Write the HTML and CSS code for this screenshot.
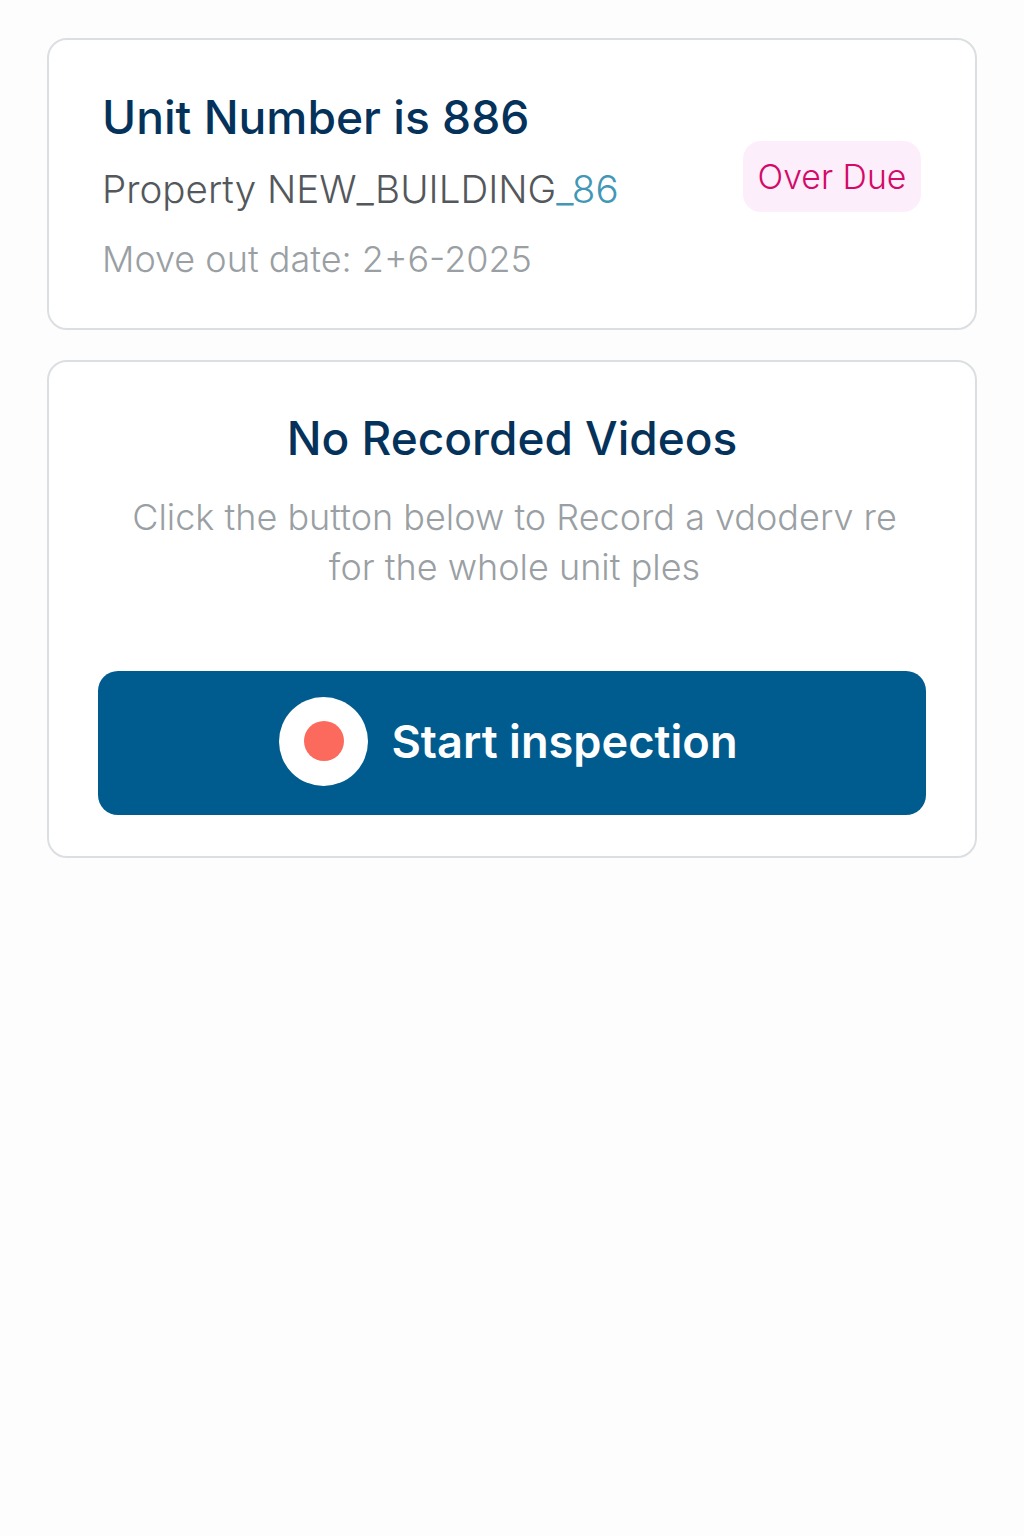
FILE: index.html
```html
<!DOCTYPE html>
<html lang="en">
<head>
    <meta charset="UTF-8">
    <meta name="viewport" content="width=device-width, initial-scale=1.0">
    <title>Unit Inspection</title>
    <link rel="stylesheet" href="styles.css">
</head>
<body>

<div class="container">
    <!-- Unit details -->
    <div class="card unit-card">
        <div class="unit-info">
            <h1 class="unit-title">Unit Number is 886</h1>
            <div class="unit-property">Property NEW_BUILDING<span class="unit-suffix">_86</span></div>
            <div class="unit-date">Move out date: 2+6-2025</div>
        </div>
        <div class="badge">Over Due</div>
    </div>

    <!-- Videos -->
    <div class="card videos-card">
        <h2 class="videos-title">No Recorded Videos</h2>
        <p class="videos-text">Click the button below to Record a vdoderv re<br>for the whole unit ples</p>
        <button class="start-button">
            <span class="record-icon"><span class="record-dot"></span></span>
            <span>Start inspection</span>
        </button>
    </div>
</div>

</body>
</html>
```

FILE: styles.css
```css
:root {
    --navy: #04325a;
    --button-bg: #005b8e;
    --border-color: #dcdfe2;
    --muted: #9a9fa4;
}

body {
    font-family: Inter, "Noto Sans", sans-serif;
    margin: 0;
    padding: 0;
    background-color: #fefdfe;
}

.container {
    display: flex;
    flex-direction: column;
    gap: 30px;
    padding: 38px 47px 0 47px;
}

.card {
    box-sizing: border-box;
    background-color: #fff;
    border: 2px solid var(--border-color);
    border-radius: 20px;
}

.unit-card {
    height: 292px;
    display: flex;
    justify-content: space-between;
    padding: 49px 54px 0 53px;
}

.unit-title {
    margin: 0;
    font-size: 46.2px;
    line-height: 56px;
    font-weight: 450;
    color: var(--navy);
}

.unit-property {
    margin-top: 21px;
    font-size: 38.6px;
    line-height: 46px;
    font-weight: 300;
    color: #54585c;
}

.unit-suffix {
    color: #4297b7;
}

.unit-date {
    margin-top: 25px;
    font-size: 36px;
    line-height: 44px;
    font-weight: 300;
    color: var(--muted);
}

.badge {
    box-sizing: border-box;
    width: 178px;
    height: 71px;
    margin-top: 52px;
    border-radius: 18px;
    background-color: #fdeefc;
    color: #d30a68;
    font-size: 33.8px;
    font-weight: 300;
    line-height: 71px;
    text-align: center;
}

.videos-card {
    height: 498px;
    padding: 48px 49px 0 49px;
    text-align: center;
}

.videos-title {
    margin: 0;
    font-size: 46px;
    line-height: 56px;
    font-weight: 450;
    color: var(--navy);
}

.videos-text {
    margin: 26px 0 0 5px;
    font-size: 36px;
    line-height: 50px;
    font-weight: 300;
    color: var(--muted);
}

.start-button {
    display: flex;
    align-items: center;
    justify-content: center;
    gap: 23px;
    width: 100%;
    height: 144px;
    margin-top: 79px;
    padding: 0 7px 4px 0;
    border: none;
    border-radius: 20px;
    background-color: var(--button-bg);
    color: #fff;
    font-family: inherit;
    font-size: 45.2px;
    font-weight: 600;
}

.record-icon {
    display: flex;
    align-items: center;
    justify-content: center;
    width: 89px;
    height: 89px;
    border-radius: 50%;
    background-color: #fff;
}

.record-dot {
    width: 40px;
    height: 40px;
    border-radius: 50%;
    background-color: #fb6a5c;
}
```
